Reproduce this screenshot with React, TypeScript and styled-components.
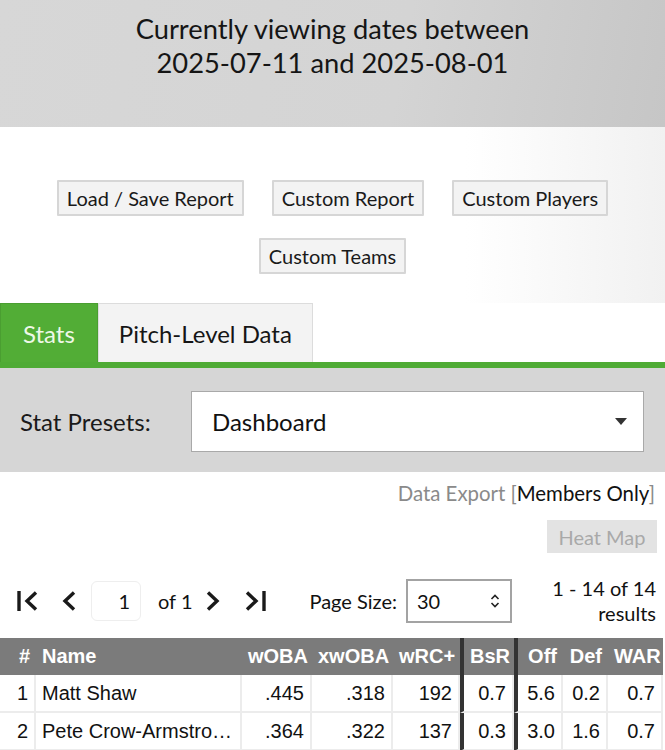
import React from 'react';
import styled, { createGlobalStyle } from 'styled-components';

const GlobalStyle = createGlobalStyle`
  html, body {
    margin: 0;
    padding: 0;
    background: #fff;
  }
  body {
    font-family: Lato, "Open Sans", sans-serif;
    color: #111;
    width: 665px;
    overflow: hidden;
  }
  * {
    box-sizing: border-box;
  }
`;

const Page = styled.div`
  width: 665px;
  min-height: 750px;
  display: flex;
  flex-direction: column;
`;

const DateBanner = styled.header`
  height: 127px;
  padding-top: 12px;
  background: linear-gradient(100deg, #d7d7d7 0%, #d4d4d4 60%, #c6c6c6 100%);
  text-align: center;
  font-size: 27.3px;
  line-height: 34px;
  color: #151515;
`;

const ButtonArea = styled.div`
  display: flex;
  flex-wrap: wrap;
  justify-content: center;
  column-gap: 28px;
  row-gap: 22px;
  padding: 53px 40px 29px;
  background: linear-gradient(90deg, #fff 0%, #fff 70%, #f1f1f1 100%);
`;

const ReportButton = styled.button`
  height: 36px;
  padding: 0 8px;
  font-family: Lato, sans-serif;
  font-size: 20px;
  color: #1a1a1a;
  background: #f3f3f3;
  border: 2px solid #d6d6d6;
  border-radius: 1px;
`;

const TabBar = styled.div`
  display: flex;
  border-bottom: 6px solid #4fab35;
`;

const Tab = styled.div<{ $active?: boolean }>`
  height: 59px;
  padding: 0 ${(p) => (p.$active ? '22px' : '20px')};
  display: flex;
  align-items: center;
  font-size: 24px;
  background: ${(p) => (p.$active ? '#52ad36' : '#f3f3f3')};
  color: ${(p) => (p.$active ? '#eef8e8' : '#151515')};
  border: 1px solid ${(p) => (p.$active ? '#4a9e31' : '#dcdcdc')};
  border-bottom: none;
`;

const PresetPanel = styled.div`
  display: flex;
  align-items: center;
  height: 104px;
  padding: 2px 21px 0 20px;
  background: #d6d6d6;
`;

const PresetLabel = styled.span`
  width: 171px;
  font-size: 24px;
  color: #1a1a1a;
`;

const PresetSelect = styled.div`
  flex: 1;
  height: 61px;
  display: flex;
  align-items: center;
  justify-content: space-between;
  padding: 0 16px 0 20px;
  background: #fff;
  border: 1px solid #a9a9a9;
  font-size: 24px;
  color: #111;
`;

const Caret = styled.span`
  width: 0;
  height: 0;
  border-left: 6px solid transparent;
  border-right: 6px solid transparent;
  border-top: 7px solid #333;
`;

const ExportArea = styled.div`
  display: flex;
  flex-direction: column;
  align-items: flex-end;
  padding: 8px 8px 0 0;
`;

const ExportLine = styled.div`
  padding-right: 2px;
  font-size: 20.4px;
  line-height: 26px;
  color: #8a8a8a;
`;

const Members = styled.span`
  color: #111;
`;

const HeatMapButton = styled.div`
  margin-top: 14px;
  width: 110px;
  height: 33px;
  display: flex;
  align-items: center;
  justify-content: center;
  background: #e3e3e3;
  color: #a9a9a9;
  font-size: 20px;
`;

const Pager = styled.div`
  display: flex;
  align-items: center;
  height: 52px;
  margin-top: 22px;
  padding: 0 9px 0 17px;
  font-size: 20px;
`;

const NavGroup = styled.div`
  display: flex;
  align-items: center;
`;

const NavIcon = styled.svg<{ $gap?: number }>`
  display: block;
  margin-right: ${(p) => p.$gap ?? 0}px;
  color: #1a1a1a;
`;

const PageInput = styled.div`
  width: 50px;
  height: 40px;
  display: flex;
  align-items: center;
  justify-content: flex-end;
  padding-right: 10px;
  margin-right: 17px;
  border: 1px solid #eeeeee;
  border-radius: 6px;
`;

const OfText = styled.span`
  margin-right: 14px;
`;

const SizeLabel = styled.span`
  margin-left: 43px;
  margin-right: 9px;
`;

const SizeSelect = styled.div`
  width: 106px;
  height: 44px;
  display: flex;
  align-items: center;
  justify-content: space-between;
  padding: 0 9px 0 9px;
  border: 2px solid #a3a3a3;
`;

const Results = styled.div`
  margin-left: auto;
  text-align: right;
  line-height: 25px;
`;

const Table = styled.table`
  margin-top: 11px;
  width: 663px;
  border-collapse: separate;
  border-spacing: 0;
  table-layout: fixed;
  font-family: "Liberation Sans", Arial, sans-serif;
  font-size: 20px;
`;

const Th = styled.th<{ $w: number; $left?: boolean; $thick?: boolean }>`
  width: ${(p) => p.$w}px;
  height: 37px;
  padding: 0 6px;
  background: #7b7b7b;
  color: #fff;
  font-weight: bold;
  text-align: ${(p) => (p.$left ? 'left' : 'right')};
  border-left: ${(p) => (p.$thick ? '4px solid #333' : 'none')};
  white-space: nowrap;
  overflow: hidden;
`;

const Td = styled.td<{ $left?: boolean; $thick?: boolean }>`
  height: 38px;
  padding: 0 6px;
  color: #111;
  text-align: ${(p) => (p.$left ? 'left' : 'right')};
  border-left: ${(p) => (p.$thick ? '4px solid #333' : 'none')};
  border-right: 2px solid #ececec;
  border-bottom: 2px solid #ececec;
  white-space: nowrap;
  overflow: hidden;
  text-overflow: ellipsis;
`;

const columns = [
  { key: '#', w: 36 },
  { key: 'Name', w: 206, left: true },
  { key: 'wOBA', w: 70 },
  { key: 'xwOBA', w: 81 },
  { key: 'wRC+', w: 67 },
  { key: 'BsR', w: 54, thick: true },
  { key: 'Off', w: 49, thick: true },
  { key: 'Def', w: 45 },
  { key: 'WAR', w: 55 },
];

const rows = [
  ['1', 'Matt Shaw', '.445', '.318', '192', '0.7', '5.6', '0.2', '0.7'],
  ['2', 'Pete Crow-Armstrong', '.364', '.322', '137', '0.3', '3.0', '1.6', '0.7'],
];

function FirstIcon() {
  return (
    <NavIcon $gap={22} width="23" height="22" viewBox="0 0 23 22">
      <path d="M2 1v20" stroke="currentColor" strokeWidth="3.4" fill="none" />
      <path d="M19 2.5L10 11l9 8.5" stroke="currentColor" strokeWidth="3.4" fill="none" />
    </NavIcon>
  );
}

function PrevIcon() {
  return (
    <NavIcon $gap={15} width="14" height="22" viewBox="0 0 14 22">
      <path d="M12 2.5L3 11l9 8.5" stroke="currentColor" strokeWidth="3.4" fill="none" />
    </NavIcon>
  );
}

function NextIcon() {
  return (
    <NavIcon $gap={23} width="14" height="22" viewBox="0 0 14 22">
      <path d="M2 2.5L11 11l-9 8.5" stroke="currentColor" strokeWidth="3.4" fill="none" />
    </NavIcon>
  );
}

function LastIcon() {
  return (
    <NavIcon width="23" height="22" viewBox="0 0 23 22">
      <path d="M4 2.5L13 11l-9 8.5" stroke="currentColor" strokeWidth="3.4" fill="none" />
      <path d="M21 1v20" stroke="currentColor" strokeWidth="3.4" fill="none" />
    </NavIcon>
  );
}

function UpDownIcon() {
  return (
    <svg width="12" height="16" viewBox="0 0 12 16">
      <path
        d="M2.5 6L6 2.5 9.5 6M2.5 10L6 13.5 9.5 10"
        stroke="#222"
        strokeWidth="1.6"
        fill="none"
      />
    </svg>
  );
}

export default function App() {
  return (
    <Page>
      <GlobalStyle />
      <DateBanner>
        Currently viewing dates between
        <br />
        2025-07-11 and 2025-08-01
      </DateBanner>

      <ButtonArea>
        <ReportButton>Load / Save Report</ReportButton>
        <ReportButton>Custom Report</ReportButton>
        <ReportButton>Custom Players</ReportButton>
        <ReportButton>Custom Teams</ReportButton>
      </ButtonArea>

      <TabBar>
        <Tab $active>Stats</Tab>
        <Tab>Pitch-Level Data</Tab>
      </TabBar>

      <PresetPanel>
        <PresetLabel>Stat Presets:</PresetLabel>
        <PresetSelect>
          Dashboard
          <Caret />
        </PresetSelect>
      </PresetPanel>

      <ExportArea>
        <ExportLine>
          Data Export [<Members>Members Only</Members>]
        </ExportLine>
        <HeatMapButton>Heat Map</HeatMapButton>
      </ExportArea>

      <Pager>
        <NavGroup>
          <FirstIcon />
          <PrevIcon />
          <PageInput>1</PageInput>
          <OfText>of 1</OfText>
          <NextIcon />
          <LastIcon />
        </NavGroup>
        <SizeLabel>Page Size:</SizeLabel>
        <SizeSelect>
          30
          <UpDownIcon />
        </SizeSelect>
        <Results>
          1 - 14 of 14
          <br />
          results
        </Results>
      </Pager>

      <Table>
        <thead>
          <tr>
            {columns.map((c) => (
              <Th key={c.key} $w={c.w} $left={c.left} $thick={c.thick}>
                {c.key}
              </Th>
            ))}
          </tr>
        </thead>
        <tbody>
          {rows.map((r) => (
            <tr key={r[0]}>
              {r.map((v, i) => (
                <Td key={i} $left={columns[i].left} $thick={columns[i].thick}>
                  {v}
                </Td>
              ))}
            </tr>
          ))}
        </tbody>
      </Table>
    </Page>
  );
}
